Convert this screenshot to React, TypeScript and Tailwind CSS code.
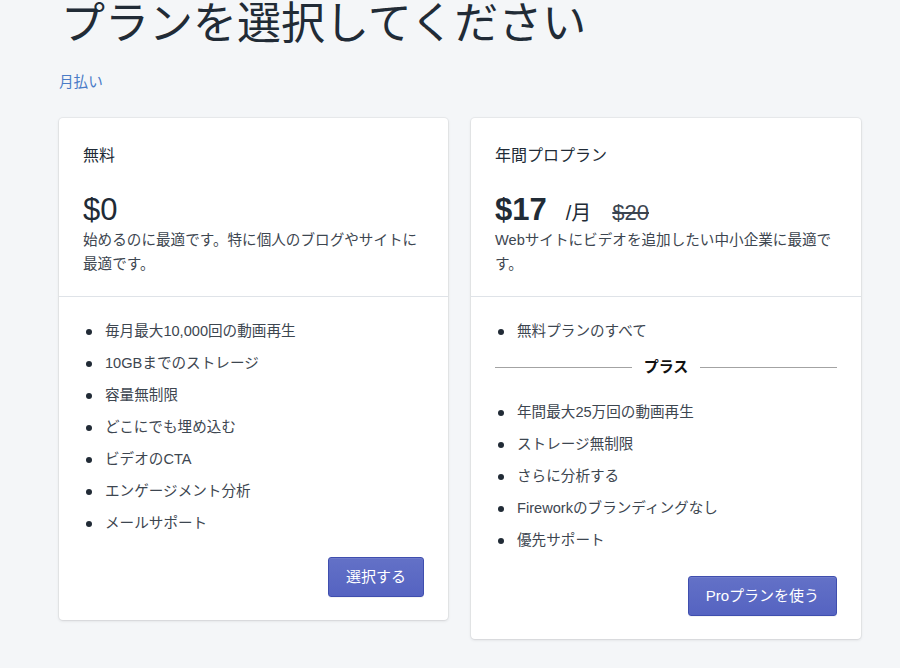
import React from 'react';

const freeFeatures = [
  '毎月最大10,000回の動画再生',
  '10GBまでのストレージ',
  '容量無制限',
  'どこにでも埋め込む',
  'ビデオのCTA',
  'エンゲージメント分析',
  'メールサポート',
];

const proFeatures = [
  '年間最大25万回の動画再生',
  'ストレージ無制限',
  'さらに分析する',
  'Fireworkのブランディングなし',
  '優先サポート',
];

const FeatureItem: React.FC<{ text: string }> = ({ text }) => (
  <li className="flex items-center h-6">
    <span className="ml-[3px] mr-[13px] w-[6px] h-[6px] rounded-full bg-[#212b36] shrink-0" />
    <span className="text-[#3d4650]">{text}</span>
  </li>
);

const PrimaryButton: React.FC<{ children: React.ReactNode }> = ({ children }) => (
  <button className="h-10 px-[17px] rounded-[3px] border border-[#3f4eae] bg-gradient-to-b from-[#6371c7] to-[#5563c1] text-white text-[15px] shadow-[inset_0_1px_0_0_#6f7bcb,0_1px_0_0_rgba(22,29,37,0.05)]">
    {children}
  </button>
);

const cardClass =
  'bg-white rounded-[4px] shadow-[0_0_0_1px_rgba(63,63,68,0.05),0_1px_3px_0_rgba(63,63,68,0.15)]';

export default function App() {
  return (
    <div
      className="min-h-screen bg-[#f4f6f8] text-[#212b36] pl-[59px] pb-10"
      style={{ fontFamily: '"Liberation Sans", "Noto Sans CJK JP", sans-serif' }}
    >
      <h1 className="text-[44px] leading-[48px] font-normal text-[#212b36] pl-[2px]">プランを選択してください</h1>
      <div className="mt-6 leading-5 text-[14.6px] text-[#4a7cc7]">月払い</div>

      <div className="mt-[26px] w-[802px] flex items-start gap-[23px] text-[14.6px]">
        {/* free plan */}
        <div className={`w-[389px] ${cardClass}`}>
          <div className="px-6 pt-[26px] pb-5">
            <h2 className="text-base leading-6 text-[#212b36]">無料</h2>
            <div className="mt-6 h-9 text-[31px] leading-[36px] font-medium">$0</div>
            <p className="leading-6 text-[#3d4650]">始めるのに最適です。特に個人のブログやサイトに最適です。</p>
          </div>
          <div className="border-t border-[#dfe3e8] px-6 pt-[23px] pb-[23px]">
            <ul className="flex flex-col gap-2">
              {freeFeatures.map(f => (
                <FeatureItem key={f} text={f} />
              ))}
            </ul>
            <div className="mt-[21px] flex justify-end">
              <PrimaryButton>選択する</PrimaryButton>
            </div>
          </div>
        </div>

        {/* pro plan */}
        <div className={`w-[390px] ${cardClass}`}>
          <div className="px-6 pt-[26px] pb-5">
            <h2 className="text-base leading-6 text-[#212b36]">年間プロプラン</h2>
            <div className="mt-6 h-9 flex items-baseline leading-[36px] overflow-visible">
              <span className="text-[31px] font-semibold">$17</span>
              <span className="ml-[19px] text-[20px]">/月</span>
              <span className="ml-[21px] text-[22px] line-through text-[#3b444f]">$20</span>
            </div>
            <p className="leading-6 text-[#3d4650]">Webサイトにビデオを追加したい中小企業に最適です。</p>
          </div>
          <div className="border-t border-[#dfe3e8] px-6 pt-[23px] pb-[23px]">
            <ul className="flex flex-col gap-2">
              <FeatureItem text="無料プランのすべて" />
            </ul>
            <div className="mt-2 h-[30px] flex items-center gap-3">
              <div className="flex-1 border-t-[1.5px] border-[#a3a3a3]" />
              <span className="font-bold text-[15px] text-[#111]">プラス</span>
              <div className="flex-1 border-t-[1.5px] border-[#a3a3a3]" />
            </div>
            <ul className="mt-[19px] flex flex-col gap-2">
              {proFeatures.map(f => (
                <FeatureItem key={f} text={f} />
              ))}
            </ul>
            <div className="mt-[23px] flex justify-end">
              <PrimaryButton>Proプランを使う</PrimaryButton>
            </div>
          </div>
        </div>
      </div>
    </div>
  );
}
